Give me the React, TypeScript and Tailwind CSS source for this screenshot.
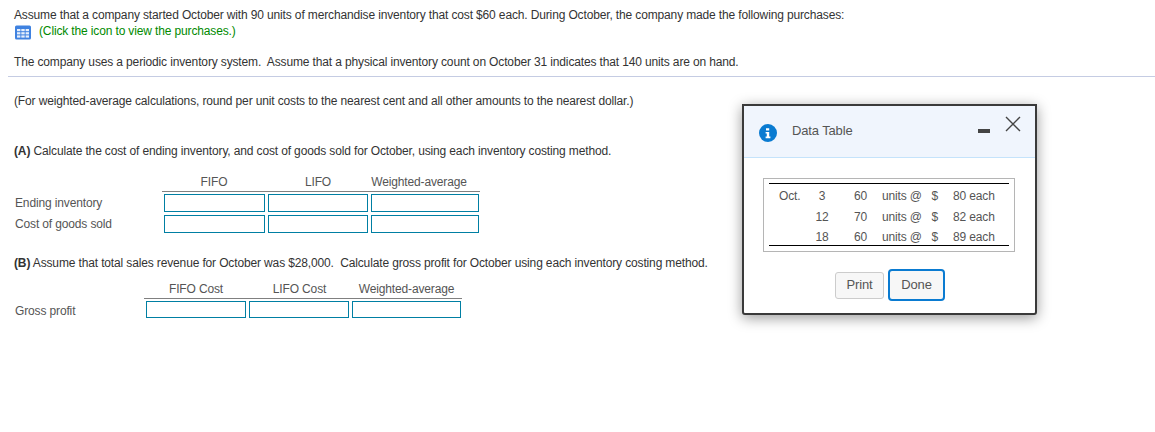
import React from "react";

const Box = ({ w, h = "h-[18px]" }: { w: string; h?: string }) => (
  <div className={`${h} ${w} border border-[#007fa3] bg-white`} />
);

const purchases = [
  ["Oct.", "3", "60", "80", "h-[21px]"],
  ["", "12", "70", "82", "h-[20px]"],
  ["", "18", "60", "89", "h-[16px]"],
];

export default function App() {
  return (
    <div className="relative w-[1155px] h-[432px] overflow-hidden bg-white text-[12px] leading-[16px] tracking-[-0.14px] text-[#333] font-['Liberation_Sans',Arial,sans-serif]">
      <div className="pl-[14px] pt-[7px]">
        <div>Assume that a company started October with 90 units of merchandise inventory that cost $60 each. During October, the company made the following purchases:</div>
        <div className="flex items-center h-[16px] text-[#008a00]">
          <svg width="18" height="15" viewBox="0 0 18 15" className="mr-[7px] mt-[2px] shrink-0">
            <rect x="1" y="0.5" width="16" height="14" rx="1.5" fill="#3f82e0" />
            <g fill="#e6effc">
              <rect x="3" y="4" width="3.4" height="2.2" /><rect x="7.3" y="4" width="3.4" height="2.2" /><rect x="11.6" y="4" width="3.4" height="2.2" />
              <rect x="3" y="7.2" width="3.4" height="2.2" /><rect x="7.3" y="7.2" width="3.4" height="2.2" /><rect x="11.6" y="7.2" width="3.4" height="2.2" />
              <rect x="3" y="10.4" width="3.4" height="2.2" /><rect x="7.3" y="10.4" width="3.4" height="2.2" /><rect x="11.6" y="10.4" width="3.4" height="2.2" />
            </g>
          </svg>
          <span>(Click the icon to view the purchases.)</span>
        </div>
      </div>
      <div className="pl-[14px] mt-[15px]">The company uses a periodic inventory system.&nbsp; Assume that a physical inventory count on October 31 indicates that 140 units are on hand.</div>
      <div className="ml-[8px] mt-[6px] h-px w-[1147px] bg-[#c5cce3]" />
      <div className="pl-[14px] mt-[16px]">(For weighted-average calculations, round per unit costs to the nearest cent and all other amounts to the nearest dollar.)</div>

      <div className="pl-[14px] mt-[34px]"><b className="font-bold">(A)</b> Calculate the cost of ending inventory, and cost of goods sold for October, using each inventory costing method.</div>
      <div className="pl-[162px] mt-[15px] text-[#555]">
        <div className="flex w-[318px] h-[16px] text-center">
          <div className="w-[104px]">FIFO</div>
          <div className="w-[104px]">LIFO</div>
          <div className="w-[98px]">Weighted-average</div>
        </div>
        <div className="mt-[1px] h-px w-[318px] bg-[#808080]" />
      </div>
      <div className="flex items-start mt-[2px] h-[19px] text-[#555]">
        <div className="pl-[15px] pt-[1px] w-[164px]">Ending inventory</div>
        <div className="flex gap-[3px]"><Box w="w-[101px]" /><Box w="w-[100px]" /><Box w="w-[108px]" /></div>
      </div>
      <div className="flex items-start mt-[2px] h-[19px] text-[#555]">
        <div className="pl-[15px] pt-[1px] w-[164px]">Cost of goods sold</div>
        <div className="flex gap-[3px]"><Box w="w-[101px]" /><Box w="w-[100px]" /><Box w="w-[108px]" /></div>
      </div>

      <div className="pl-[14px] mt-[21px]"><b className="font-bold">(B)</b> Assume that total sales revenue for October was $28,000.&nbsp; Calculate gross profit for October using each inventory costing method.</div>
      <div className="pl-[144px] mt-[10px] text-[#555]">
        <div className="flex w-[318px] h-[16px] text-center">
          <div className="w-[104px]">FIFO Cost</div>
          <div className="w-[103px]">LIFO Cost</div>
          <div className="w-[111px]">Weighted-average</div>
        </div>
        <div className="mt-[1px] h-px w-[318px] bg-[#808080]" />
      </div>
      <div className="flex items-start mt-[2px] text-[#555]">
        <div className="pl-[15px] pt-[2px] w-[146px]">Gross profit</div>
        <div className="flex gap-[3px]"><Box w="w-[100px]" h="h-[17px]" /><Box w="w-[100px]" h="h-[17px]" /><Box w="w-[109px]" h="h-[17px]" /></div>
      </div>

      <div className="absolute left-[742px] top-[104px] w-[295px] h-[211px] border-2 border-[#3a3a3a] rounded-b-[3px] bg-white shadow-[0_3px_14px_rgba(0,0,0,0.4)] flex flex-col text-[#555]">
        <div className="relative h-[52px] shrink-0 bg-[#f0f5fd] border-b border-[#c5e3fb] flex items-center">
          <svg width="18" height="18" viewBox="0 0 18 18" className="ml-[15px] mt-[2px]">
            <circle cx="9" cy="9" r="9" fill="#0a7bd1" />
            <path d="M7 4.2h3.2v2.4H7zM6.6 8h3.6v4.6h1.2v1.6H6.6v-1.6h1.2V9.6H6.6z" fill="#fff" />
          </svg>
          <span className="ml-[15px] mt-[-2px] text-[13px]">Data Table</span>
          <div className="absolute left-[234px] top-[23px] w-[12px] h-[4px] bg-[#444]" />
          <svg width="16" height="16" viewBox="0 0 16 16" className="absolute left-[261px] top-[10px]">
            <path d="M1 1 L15 15 M15 1 L1 15" stroke="#444" strokeWidth="1.4" fill="none" />
          </svg>
        </div>
        <div className="ml-[19px] mt-[20px] w-[252px] h-[74px] border border-[#b5b5b5] px-[5px] pt-[4px]">
          <div className="border-y border-black h-[63px] pt-[4px]">
            {purchases.map((r, i) => (
              <div key={i} className={`flex items-start whitespace-nowrap ${r[4]}`}>
                <div className="w-[10px]" />
                <div className="w-[28px]">{r[0]}</div>
                <div className="w-[30px] text-center">{r[1]}</div>
                <div className="w-[30px] text-right">{r[2]}</div>
                <div className="ml-[15px] w-[41px]">units @</div>
                <div className="w-[15px] text-right">$</div>
                <div className="ml-[15px]">{r[3]} each</div>
              </div>
            ))}
          </div>
        </div>
        <div className="flex mt-[17px] ml-[91px] gap-[4px] items-center text-[13px]">
          <div className="w-[49px] h-[27px] flex items-center justify-center border border-[#ccc] rounded-[3px] bg-[#f7f7f7]">Print</div>
          <div className="w-[57px] h-[32px] flex items-center justify-center border-2 border-[#0a7bd1] rounded-[4px] bg-[#f7f7f7]">Done</div>
        </div>
      </div>
    </div>
  );
}
